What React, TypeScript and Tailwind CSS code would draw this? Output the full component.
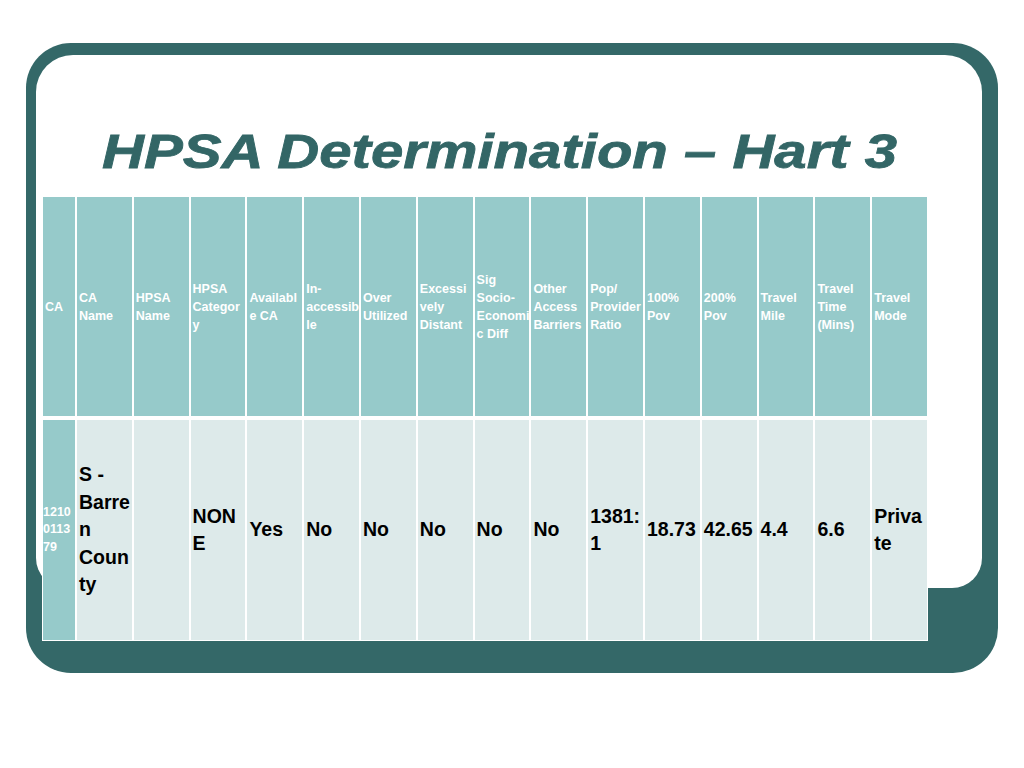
const headers: string[][] = [
  ["CA"],
  ["CA", "Name"],
  ["HPSA", "Name"],
  ["HPSA", "Categor", "y"],
  ["Availabl", "e CA"],
  ["In-", "accessib", "le"],
  ["Over", "Utilized"],
  ["Excessi", "vely", "Distant"],
  ["Sig", "Socio-", "Economi", "c Diff"],
  ["Other", "Access", "Barriers"],
  ["Pop/", "Provider", "Ratio"],
  ["100%", "Pov"],
  ["200%", "Pov"],
  ["Travel", "Mile"],
  ["Travel", "Time", "(Mins)"],
  ["Travel", "Mode"],
];

const row: string[][] = [
  ["S -", "Barre", "n", "Coun", "ty"],
  [],
  ["NON", "E"],
  ["Yes"],
  ["No"],
  ["No"],
  ["No"],
  ["No"],
  ["No"],
  ["1381:", "1"],
  ["18.73"],
  ["42.65"],
  ["4.4"],
  ["6.6"],
  ["Priva", "te"],
];

function Lines({ lines }: { lines: string[] }) {
  return (
    <div>
      {lines.map((l, i) => (
        <div key={i} className="whitespace-nowrap">
          {l}
        </div>
      ))}
    </div>
  );
}

export default function App() {
  return (
    <div className="min-h-screen w-[1024px] bg-white pt-[43px] font-['Liberation_Sans',Arial,sans-serif]">
      <div className="ml-[26px] h-[630px] w-[972px] rounded-[45px] bg-[#346868] pl-[10px] pr-[16px] pt-[12px]">
        <div className="h-[533px] rounded-t-[37px] rounded-b-[30px] bg-white pl-[6px] pt-[73px]">
          <div className="h-[48px] pr-[24px] text-center">
            <span className="inline-block scale-x-[1.21] text-[48px] font-bold italic leading-[48px] text-[#336666] [-webkit-text-stroke:0.8px_#336666]">
              HPSA Determination – Hart 3
            </span>
          </div>

          <div className="mt-[20px] grid w-[886px] grid-cols-[32px_repeat(15,minmax(0,1fr))] grid-rows-[219px_220px] gap-x-[2px] gap-y-[4px] bg-white p-[1px]">
            {headers.map((h, i) => (
              <div
                key={i}
                className="flex items-center overflow-hidden bg-[#96caca] pl-[2px] text-[12.5px] font-bold leading-[18px] text-white"
              >
                <Lines lines={h} />
              </div>
            ))}

            <div className="flex items-center overflow-hidden bg-[#96caca] text-[12.5px] font-bold leading-[17.5px] text-white">
              <Lines lines={["1210", "0113", "79"]} />
            </div>
            {row.map((c, i) => (
              <div
                key={i}
                className="flex items-center bg-[#ddeaea] pl-[2px] text-[19.5px] font-bold leading-[27.5px] text-black"
              >
                <Lines lines={c} />
              </div>
            ))}
          </div>
        </div>
      </div>
    </div>
  );
}
